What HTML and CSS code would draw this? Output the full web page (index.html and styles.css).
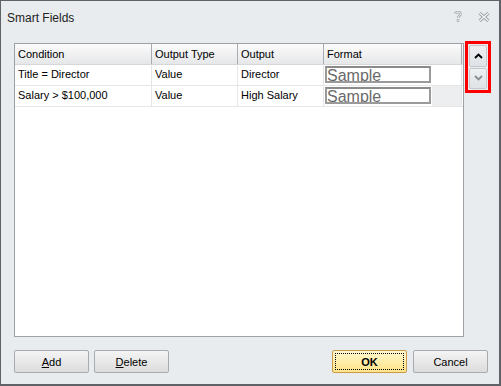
FILE: index.html
```html
<!DOCTYPE html>
<html lang="en">
<head>
    <meta charset="UTF-8">
    <title>Smart Fields</title>
    <link rel="stylesheet" href="styles.css">
</head>
<body>
    <div class="dialog">
        <div class="titlebar">
            <span class="title">Smart Fields</span>
            <div class="title-icons">
                <svg class="help-icon" width="8" height="11" viewBox="0 0 8 11">
                    <path d="M1.5 3 C1.5 0.5 6.5 0.5 6.5 3 C6.5 4.8 4 5 4 7" fill="none" stroke="#a8acb0" stroke-width="2.6"/>
                    <path d="M1.5 3 C1.5 0.5 6.5 0.5 6.5 3 C6.5 4.8 4 5 4 7" fill="none" stroke="#f4f5f6" stroke-width="1"/>
                    <rect x="2.7" y="8.2" width="2.6" height="2.6" fill="#a8acb0"/>
                    <rect x="3.5" y="9" width="1" height="1" fill="#f4f5f6"/>
                </svg>
                <svg class="close-icon" width="12" height="10" viewBox="0 0 12 10">
                    <path d="M1.5 1 L10.5 9 M10.5 1 L1.5 9" stroke="#9ea2a6" stroke-width="3.2"/>
                    <path d="M1.5 1 L10.5 9 M10.5 1 L1.5 9" stroke="#f4f5f6" stroke-width="1.2"/>
                </svg>
            </div>
        </div>

        <div class="main">
            <div class="grid">
                <div class="grid-row grid-head">
                    <div class="cell col-cond">Condition</div>
                    <div class="cell col-type">Output Type</div>
                    <div class="cell col-out">Output</div>
                    <div class="cell col-fmt">Format</div>
                </div>
                <div class="grid-row">
                    <div class="cell col-cond">Title = Director</div>
                    <div class="cell col-type">Value</div>
                    <div class="cell col-out">Director</div>
                    <div class="cell col-fmt"><span class="sample">Sample</span></div>
                </div>
                <div class="grid-row">
                    <div class="cell col-cond">Salary &gt; $100,000</div>
                    <div class="cell col-type">Value</div>
                    <div class="cell col-out">High Salary</div>
                    <div class="cell col-fmt shaded"><span class="sample">Sample</span></div>
                </div>
            </div>

            <div class="move-box">
                <button class="move-btn">
                    <svg width="9" height="6" viewBox="0 0 9 6"><path d="M1 5 L4.5 1.5 L8 5" fill="none" stroke="#000" stroke-width="1.8"/></svg>
                </button>
                <button class="move-btn">
                    <svg width="9" height="6" viewBox="0 0 9 6"><path d="M1 1 L4.5 4.5 L8 1" fill="none" stroke="#8a8e94" stroke-width="1.8"/></svg>
                </button>
            </div>
        </div>

        <div class="footer">
            <div class="footer-left">
                <button class="btn"><u>A</u>dd</button>
                <button class="btn"><u>D</u>elete</button>
            </div>
            <div class="footer-right">
                <button class="btn btn-ok"><span class="focus">OK</span></button>
                <button class="btn">Cancel</button>
            </div>
        </div>
    </div>
</body>
</html>
```

FILE: styles.css
```css
body {
    margin: 0;
    font-family: "Liberation Sans", Arial, sans-serif;
    font-size: 11px;
    color: #000;
    background: #fff;
}
.dialog {
    width: 501px;
    height: 386px;
    box-sizing: border-box;
    border: 1px solid #5f6368;
    border-right-width: 2px;
    border-bottom-width: 2px;
    background-color: #e9ecef;
    display: flex;
    flex-direction: column;
}
.titlebar {
    height: 42px;
    display: flex;
    align-items: flex-start;
    justify-content: space-between;
    padding: 10px 9px 0 6px;
    box-sizing: border-box;
}
.title {
    font-size: 12px;
    color: #222;
}
.title-icons {
    display: flex;
    align-items: center;
    gap: 16px;
}
.main {
    display: flex;
    align-items: flex-start;
    height: 294px;
}
.grid {
    margin-left: 13px;
    width: 450px;
    height: 294px;
    box-sizing: border-box;
    border: 1px solid #9da1a6;
    background-color: #fff;
}
.grid-row {
    display: flex;
    height: 20px;
    border-bottom: 1px solid #e4e6e8;
}
.grid-head {
    background: linear-gradient(#fbfbfb, #e6e7e9);
    border-bottom: 1px solid #d5d7da;
}
.cell {
    box-sizing: border-box;
    padding: 3px 0 0 3px;
    border-right: 1px solid #e4e6e8;
    white-space: nowrap;
    overflow: hidden;
}
.grid-head .cell {
    border-right: 1px solid #a9acb0;
    padding-top: 4px;
}
.col-cond { width: 137px; }
.col-type { width: 86px; }
.col-out { width: 86px; }
.col-fmt { width: 138px; padding: 1px 0 0 1px; }
.grid-head .col-fmt { padding-left: 3px; }
.shaded {
    background: linear-gradient(to right, #fff 108px, #eceef0 108px);
}
.sample {
    display: block;
    width: 106px;
    height: 17px;
    box-sizing: border-box;
    border: 2px solid #9a9a9a;
    border-top-color: #8a8a8a;
    background-color: #fff;
    font-size: 16px;
    line-height: 15px;
    color: #6a6a6a;
    overflow: hidden;
}
.move-box {
    margin: -2px 0 0 1px;
    width: 26px;
    height: 52px;
    box-sizing: border-box;
    border: 3px solid #ff0000;
    display: flex;
    flex-direction: column;
    padding: 1px;
    gap: 1px;
}
.move-btn {
    flex: 1;
    margin: 0;
    padding: 0;
    border: 1px solid #c5c8cc;
    border-radius: 2px;
    background: linear-gradient(#eef0f2, #dfe2e6);
    display: flex;
    align-items: center;
    justify-content: center;
}
.footer {
    display: flex;
    justify-content: space-between;
    padding: 13px 11px 0 13px;
}
.footer-left, .footer-right {
    display: flex;
    gap: 5px;
}
.footer-right {
    gap: 6px;
}
.btn {
    width: 75px;
    height: 23px;
    margin: 0;
    padding: 0;
    font-family: "Liberation Sans", Arial, sans-serif;
    font-size: 11px;
    color: #000;
    border: 1px solid #a9abae;
    border-radius: 2px;
    background: linear-gradient(#f4f4f4, #dcdcdc);
}
.btn-ok {
    border-color: #c79a4c;
    background: linear-gradient(#fff7cc, #ffe487);
    font-weight: bold;
    padding: 2px;
}
.focus {
    display: flex;
    align-items: center;
    justify-content: center;
    height: 100%;
    box-sizing: border-box;
    border: 1px dotted #000;
}
```
